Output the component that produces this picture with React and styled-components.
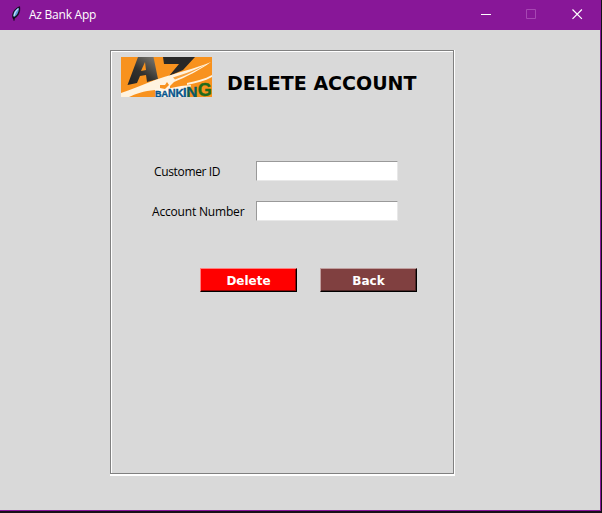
import React from "react";
import styled, { createGlobalStyle } from "styled-components";

const GlobalStyle = createGlobalStyle`
  * { box-sizing: border-box; }
  body { margin: 0; background: #170f18; overflow: hidden; }
`;

const Desktop = styled.div`
  width: 602px;
  height: 513px;
  padding: 0 1px 2px 0;
  background: #170f18;
`;

const Window = styled.main`
  display: flex;
  flex-direction: column;
  height: 511px;
  background: #d9d9d9;
  border-right: 1px solid #881798;
  border-bottom: 1px solid #881798;
`;

const TitleBar = styled.header`
  display: flex;
  flex: none;
  height: 30px;
  background: #881798;
`;

const Feather = styled.svg`
  flex: none;
  width: 16px;
  height: 16px;
  margin: 6px 5px 0 8px;
`;

const WindowTitle = styled.span`
  flex: 1;
  color: #fff;
  font: 12px/30px "Open Sans", "Noto Sans", sans-serif;
  letter-spacing: -0.24px;
`;

const WindowControl = styled.button`
  display: flex;
  align-items: center;
  justify-content: center;
  width: ${(p) => (p.$last ? "46px" : "45px")};
  height: 28px;
  padding: 0;
  border: 0;
  background: none;
  color: ${(p) => (p.$disabled ? "#a647b3" : "#fff")};
`;

const Workspace = styled.section`
  display: flex;
  flex: 1;
  padding: 20px 0 0 110px;
`;

const Groove = styled.div`
  width: 345px;
  height: 426px;
  border: solid #fff;
  border-width: 0 1px 2px 0;
`;

const Panel = styled.form`
  height: 424px;
  border: 1px solid #808080;
  box-shadow: inset 1px 1px 0 #fff;
  padding: 6px 0 0 10px;
`;

const PanelHeader = styled.div`
  display: flex;
  height: 40px;
`;

const Logo = styled.svg`
  flex: none;
  width: 91px;
  height: 40px;
`;

const LogoText = styled.text`
  font-family: "Liberation Sans", sans-serif;
  font-weight: bold;
  stroke-width: 0.35px;
`;

const Heading = styled.h1`
  margin: 13px 0 0 15px;
  color: #000;
  font: bold 19px/26px "DejaVu Sans", sans-serif;
  white-space: nowrap;
`;

const Fields = styled.div`
  display: grid;
  row-gap: 20px;
  padding: 64px 0 0 31px;
`;

const Field = styled.label`
  display: grid;
  grid-template-columns: 104px 142px;
  height: 20px;
`;

const FieldLabel = styled.span`
  padding-left: ${(p) => p.$indent || 0}px;
  color: #000;
  font: 12px/22px "Open Sans", "Noto Sans", sans-serif;
  letter-spacing: ${(p) => p.$spacing || 0}px;
  white-space: nowrap;
`;

const Entry = styled.input`
  width: 142px;
  height: 20px;
  padding: 0 2px;
  border: 1px solid;
  border-color: #999 #e8e8e8 #e8e8e8 #999;
  border-radius: 0;
  background: #fff;
  outline: 0;
`;

const Actions = styled.div`
  display: flex;
  gap: 23px;
  padding: 47px 0 0 79px;
`;

const ActionButton = styled.button`
  width: 97px;
  height: 24px;
  padding: 1px 0 0;
  border: 1px solid;
  border-color: ${(p) => p.$light} #000 #000 ${(p) => p.$light};
  border-radius: 0;
  background: ${(p) => p.$face};
  box-shadow: inset -1px -1px 0 ${(p) => p.$shade};
  color: #fff;
  font: bold 12px/20px "DejaVu Sans", sans-serif;
`;

export default function App() {
  return (
    <Desktop>
      <GlobalStyle />
      <Window>
        <TitleBar>
          <Feather viewBox="0 0 16 16">
            <path d="M5 12.5C3.4 8 6 2.8 11.6 .6C12.6 5.2 10.4 10.5 6.6 12.2L6 15" fill="#0c0c14" stroke="#0c0c14" strokeWidth=".5" />
            <path d="M5.6 11C4.8 7.2 7 3.6 10.8 1.8C11.2 5.5 9.3 9.2 6.6 10.8" fill="#5a96d8" />
            <path d="M10.3 2.6C8 4.5 6.4 7 6 10" fill="none" stroke="#c4e2fa" strokeWidth="1.1" />
          </Feather>
          <WindowTitle>Az Bank App</WindowTitle>
          <WindowControl type="button" aria-label="Minimize">
            <svg width="11" height="11"><path d="M0 5.5h10" stroke="currentColor" /></svg>
          </WindowControl>
          <WindowControl type="button" aria-label="Maximize" $disabled>
            <svg width="11" height="11"><path d="M.5 .5h9v9h-9z" fill="none" stroke="currentColor" /></svg>
          </WindowControl>
          <WindowControl type="button" aria-label="Close" $last>
            <svg width="11" height="11"><path d="M.5 .5l9.4 9.4M9.9 .5L.5 9.9" stroke="currentColor" strokeWidth="1.2" /></svg>
          </WindowControl>
        </TitleBar>
        <Workspace>
          <Groove>
            <Panel>
              <PanelHeader>
                <Logo viewBox="0 0 91 40">
                  <defs>
                    <linearGradient id="ink" x1="0" y1="1" x2=".8" y2="0">
                      <stop offset="0" stopColor="#222" />
                      <stop offset=".5" stopColor="#33322f" />
                      <stop offset="1" stopColor="#75716a" />
                    </linearGradient>
                  </defs>
                  <path d="M0 0h91v40H0z" fill="#f8921e" />
                  <path d="M17 0H32.5L37 22L26 25L25 18L19 19L16 26L6.5 28z" fill="url(#ink)" />
                  <path d="M24 5L20 14L25 13z" fill="#f8921e" />
                  <path d="M42 0H74L62 13L48 19L58 7H43z" fill="#292827" />
                  <path d="M0 36C14 31 24 27 37 22C55 16 76 11 90 5C79 13 65 20 53 25L49 29V33H34C23 34 14 37 8 40H0z" fill="#fff3df" />
                  <path d="M52 20.5C64 17 77 11.5 85 7.5C76 13 64 19 54 22.5z" fill="#f8a23f" />
                  <path d="M34 32L50 31L60 29L70 28L67 40H34z" fill="#fff6e8" />
                  <path d="M39 28L44 28L46 25L48 28L44 32L39 31z" fill="#f8921e" />
                  <path d="M66 26C75 24 84 22 91 18V20C84 24 75 26 66 28z" fill="#fff3df" />
                  <LogoText y="39.5" fill="#07558e" stroke="#07558e">
                    <tspan x="34" fontSize="9">B</tspan>
                    <tspan x="40.3" fontSize="9.5">A</tspan>
                    <tspan x="47" fontSize="10.5">N</tspan>
                    <tspan x="54.5" fontSize="11.5">K</tspan>
                    <tspan x="62" fontSize="13">I</tspan>
                    <tspan x="65.2" fontSize="15.5" fill="#075a64" stroke="#075a64">N</tspan>
                    <tspan x="76.7" y="39" fontSize="18" fill="#216a1b" stroke="#216a1b">G</tspan>
                  </LogoText>
                </Logo>
                <Heading>DELETE ACCOUNT</Heading>
              </PanelHeader>
              <Fields>
                <Field>
                  <FieldLabel $indent={2} $spacing={-0.35}>Customer ID</FieldLabel>
                  <Entry />
                </Field>
                <Field>
                  <FieldLabel $spacing={-0.18}>Account Number</FieldLabel>
                  <Entry />
                </Field>
              </Fields>
              <Actions>
                <ActionButton type="button" $face="#ff0000" $light="#ff8080" $shade="#990000">Delete</ActionButton>
                <ActionButton type="button" $face="#804040" $light="#c09f9f" $shade="#4d2626">Back</ActionButton>
              </Actions>
            </Panel>
          </Groove>
        </Workspace>
      </Window>
    </Desktop>
  );
}
